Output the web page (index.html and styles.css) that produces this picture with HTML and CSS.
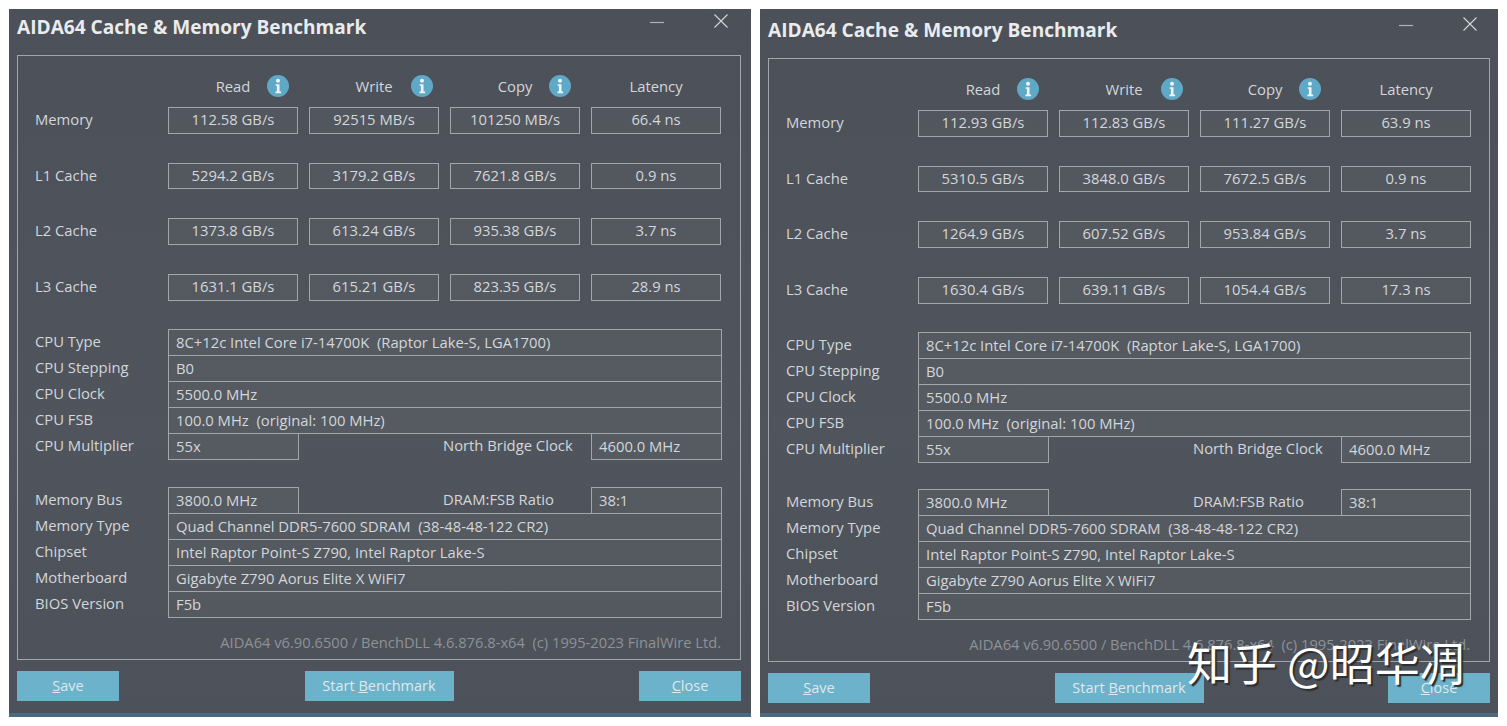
FILE: index.html
```html
<!DOCTYPE html>
<html lang="zh-CN">
<head>
    <meta charset="UTF-8">
    <title>AIDA64 Cache &amp; Memory Benchmark</title>
    <link rel="stylesheet" href="styles.css">
</head>
<body>
    <div class="window window-left">
        <div class="titlebar">
            <span class="title">AIDA64 Cache &amp; Memory Benchmark</span>
            <svg class="btn-min" width="16" height="3" viewBox="0 0 16 3"><path d="M1 1.5h14" stroke="#aeb2b7" stroke-width="1.2"/></svg>
            <svg class="btn-x" width="16" height="16" viewBox="0 0 16 16"><path d="M1.5 1.5l13 13M14.5 1.5l-13 13" stroke="#d5d8db" stroke-width="1.1" fill="none"/></svg>
        </div>
        <div class="frame">
            <div class="bench-head">
                <div></div>
                <div class="head">Read<svg class="info" viewBox="0 0 22 22"><circle cx="11" cy="11" r="11" fill="#5fa9c6"/><circle cx="11" cy="5.8" r="2" fill="#eef6f9"/><path d="M8.6 9.2h3.9v7.4h1.6v1.6H8.4v-1.6h1.5v-5.8H8.6z" fill="#eef6f9"/></svg></div>
                <div class="head">Write<svg class="info info-w" viewBox="0 0 22 22"><circle cx="11" cy="11" r="11" fill="#5fa9c6"/><circle cx="11" cy="5.8" r="2" fill="#eef6f9"/><path d="M8.6 9.2h3.9v7.4h1.6v1.6H8.4v-1.6h1.5v-5.8H8.6z" fill="#eef6f9"/></svg></div>
                <div class="head">Copy<svg class="info" viewBox="0 0 22 22"><circle cx="11" cy="11" r="11" fill="#5fa9c6"/><circle cx="11" cy="5.8" r="2" fill="#eef6f9"/><path d="M8.6 9.2h3.9v7.4h1.6v1.6H8.4v-1.6h1.5v-5.8H8.6z" fill="#eef6f9"/></svg></div>
                <div class="head">Latency</div>
            </div>
            <div class="bench">
                <div class="label">Memory</div>
                <div class="cell">112.58 GB/s</div>
                <div class="cell">92515 MB/s</div>
                <div class="cell">101250 MB/s</div>
                <div class="cell">66.4 ns</div>

                <div class="label">L1 Cache</div>
                <div class="cell">5294.2 GB/s</div>
                <div class="cell">3179.2 GB/s</div>
                <div class="cell">7621.8 GB/s</div>
                <div class="cell">0.9 ns</div>

                <div class="label">L2 Cache</div>
                <div class="cell">1373.8 GB/s</div>
                <div class="cell">613.24 GB/s</div>
                <div class="cell">935.38 GB/s</div>
                <div class="cell">3.7 ns</div>

                <div class="label">L3 Cache</div>
                <div class="cell">1631.1 GB/s</div>
                <div class="cell">615.21 GB/s</div>
                <div class="cell">823.35 GB/s</div>
                <div class="cell">28.9 ns</div>
            </div>

            <div class="info-block">
                <div class="row"><div class="label">CPU Type</div><div class="val">8C+12c Intel Core i7-14700K&nbsp; (Raptor Lake-S, LGA1700)</div></div>
                <div class="row"><div class="label">CPU Stepping</div><div class="val">B0</div></div>
                <div class="row"><div class="label">CPU Clock</div><div class="val">5500.0 MHz</div></div>
                <div class="row"><div class="label">CPU FSB</div><div class="val">100.0 MHz&nbsp; (original: 100 MHz)</div></div>
                <div class="row"><div class="label">CPU Multiplier</div><div class="val short">55x</div><div class="side">North Bridge Clock</div><div class="val">4600.0 MHz</div></div>
            </div>

            <div class="info-block block-2">
                <div class="row"><div class="label">Memory Bus</div><div class="val short">3800.0 MHz</div><div class="side">DRAM:FSB Ratio</div><div class="val">38:1</div></div>
                <div class="row"><div class="label">Memory Type</div><div class="val">Quad Channel DDR5-7600 SDRAM&nbsp; (38-48-48-122 CR2)</div></div>
                <div class="row"><div class="label">Chipset</div><div class="val">Intel Raptor Point-S Z790, Intel Raptor Lake-S</div></div>
                <div class="row"><div class="label">Motherboard</div><div class="val">Gigabyte Z790 Aorus Elite X WiFi7</div></div>
                <div class="row"><div class="label">BIOS Version</div><div class="val">F5b</div></div>
            </div>

            <div class="copyright">AIDA64 v6.90.6500 / BenchDLL 4.6.876.8-x64&nbsp; (c) 1995-2023 FinalWire Ltd.</div>
        </div>
        <div class="buttons">
            <button class="btn btn-side"><u>S</u>ave</button>
            <button class="btn btn-start">Start <u>B</u>enchmark</button>
            <button class="btn btn-side"><u>C</u>lose</button>
        </div>
    </div>

    <div class="window window-right">
        <div class="titlebar">
            <span class="title">AIDA64 Cache &amp; Memory Benchmark</span>
            <svg class="btn-min" width="16" height="3" viewBox="0 0 16 3"><path d="M1 1.5h14" stroke="#aeb2b7" stroke-width="1.2"/></svg>
            <svg class="btn-x" width="16" height="16" viewBox="0 0 16 16"><path d="M1.5 1.5l13 13M14.5 1.5l-13 13" stroke="#d5d8db" stroke-width="1.1" fill="none"/></svg>
        </div>
        <div class="frame">
            <div class="bench-head">
                <div></div>
                <div class="head">Read<svg class="info" viewBox="0 0 22 22"><circle cx="11" cy="11" r="11" fill="#5fa9c6"/><circle cx="11" cy="5.8" r="2" fill="#eef6f9"/><path d="M8.6 9.2h3.9v7.4h1.6v1.6H8.4v-1.6h1.5v-5.8H8.6z" fill="#eef6f9"/></svg></div>
                <div class="head">Write<svg class="info info-w" viewBox="0 0 22 22"><circle cx="11" cy="11" r="11" fill="#5fa9c6"/><circle cx="11" cy="5.8" r="2" fill="#eef6f9"/><path d="M8.6 9.2h3.9v7.4h1.6v1.6H8.4v-1.6h1.5v-5.8H8.6z" fill="#eef6f9"/></svg></div>
                <div class="head">Copy<svg class="info" viewBox="0 0 22 22"><circle cx="11" cy="11" r="11" fill="#5fa9c6"/><circle cx="11" cy="5.8" r="2" fill="#eef6f9"/><path d="M8.6 9.2h3.9v7.4h1.6v1.6H8.4v-1.6h1.5v-5.8H8.6z" fill="#eef6f9"/></svg></div>
                <div class="head">Latency</div>
            </div>
            <div class="bench">
                <div class="label">Memory</div>
                <div class="cell">112.93 GB/s</div>
                <div class="cell">112.83 GB/s</div>
                <div class="cell">111.27 GB/s</div>
                <div class="cell">63.9 ns</div>

                <div class="label">L1 Cache</div>
                <div class="cell">5310.5 GB/s</div>
                <div class="cell">3848.0 GB/s</div>
                <div class="cell">7672.5 GB/s</div>
                <div class="cell">0.9 ns</div>

                <div class="label">L2 Cache</div>
                <div class="cell">1264.9 GB/s</div>
                <div class="cell">607.52 GB/s</div>
                <div class="cell">953.84 GB/s</div>
                <div class="cell">3.7 ns</div>

                <div class="label">L3 Cache</div>
                <div class="cell">1630.4 GB/s</div>
                <div class="cell">639.11 GB/s</div>
                <div class="cell">1054.4 GB/s</div>
                <div class="cell">17.3 ns</div>
            </div>

            <div class="info-block">
                <div class="row"><div class="label">CPU Type</div><div class="val">8C+12c Intel Core i7-14700K&nbsp; (Raptor Lake-S, LGA1700)</div></div>
                <div class="row"><div class="label">CPU Stepping</div><div class="val">B0</div></div>
                <div class="row"><div class="label">CPU Clock</div><div class="val">5500.0 MHz</div></div>
                <div class="row"><div class="label">CPU FSB</div><div class="val">100.0 MHz&nbsp; (original: 100 MHz)</div></div>
                <div class="row"><div class="label">CPU Multiplier</div><div class="val short">55x</div><div class="side">North Bridge Clock</div><div class="val">4600.0 MHz</div></div>
            </div>

            <div class="info-block block-2">
                <div class="row"><div class="label">Memory Bus</div><div class="val short">3800.0 MHz</div><div class="side">DRAM:FSB Ratio</div><div class="val">38:1</div></div>
                <div class="row"><div class="label">Memory Type</div><div class="val">Quad Channel DDR5-7600 SDRAM&nbsp; (38-48-48-122 CR2)</div></div>
                <div class="row"><div class="label">Chipset</div><div class="val">Intel Raptor Point-S Z790, Intel Raptor Lake-S</div></div>
                <div class="row"><div class="label">Motherboard</div><div class="val">Gigabyte Z790 Aorus Elite X WiFi7</div></div>
                <div class="row"><div class="label">BIOS Version</div><div class="val">F5b</div></div>
            </div>

            <div class="copyright">AIDA64 v6.90.6500 / BenchDLL 4.6.876.8-x64&nbsp; (c) 1995-2023 FinalWire Ltd.</div>
        </div>
        <div class="buttons">
            <button class="btn btn-side"><u>S</u>ave</button>
            <button class="btn btn-start">Start <u>B</u>enchmark</button>
            <button class="btn btn-side"><u>C</u>lose</button>
        </div>
        <div class="watermark">知乎 @昭华凋</div>
    </div>
</body>
</html>
```

FILE: styles.css
```css
/* page */
body {
    margin: 0;
    height: 726px;
    box-sizing: border-box;
    padding: 9px 9px 0;
    display: flex;
    gap: 9px;
    overflow: hidden;
    background-color: #fff;
    font-family: "Open Sans", "Noto Sans", sans-serif;
    font-size: 14.8px;
    color: #d3d6da;
}

/* window */
.window {
    position: relative;
    box-sizing: border-box;
    height: 708px;
    padding: 0 8px;
    background: linear-gradient(to bottom, #4b5059 0, #50555d 60%, #4d525a 99.4%, #4a6a7e 99.5%);
}

.window-left {
    width: 742px;
    padding-right: 10px;
}

.window-right {
    width: 738px;
    padding-top: 3px;
}

.titlebar {
    height: 46px;
    display: flex;
    align-items: flex-start;
}

.title {
    margin-top: 5px;
    font-size: 19.1px;
    font-weight: 700;
    line-height: 26px;
    color: #e9ebed;
    white-space: nowrap;
}

.btn-min {
    margin: 12px 0 0 auto;
}

.btn-x {
    margin: 4px 12px 0 48px;
}

/* main frame */
.frame {
    box-sizing: border-box;
    height: 605px;
    padding: 20px 18px 0 17px;
    border: 1px solid #a2a6ac;
}

.window-right .frame {
    height: 604px;
}

.bench-head,
.bench {
    display: grid;
    grid-template-columns: 122px repeat(4, 130px);
    column-gap: 11px;
}

/* second window sits one pixel tighter */
.window-right .bench-head,
.window-right .bench {
    grid-template-columns: 121px repeat(4, 130px);
}

.bench-head {
    height: 22px;
    margin-bottom: 9px;
}

.bench {
    grid-auto-rows: 26.7px;
    row-gap: 29px;
}

.head {
    position: relative;
    text-align: center;
    line-height: 20px;
}

.label {
    line-height: 25px;
    white-space: nowrap;
}

.cell {
    box-sizing: border-box;
    border: 1px solid #a2a6ac;
    background-color: rgba(255, 255, 255, 0.035);
    text-align: center;
    line-height: 23px;
    white-space: nowrap;
}

.info {
    position: absolute;
    top: -1px;
    right: 9px;
    width: 22px;
    height: 22px;
}

.info-w {
    right: 6px;
}

/* cpu / memory rows */
.info-block {
    margin-top: 28px;
}

.block-2 {
    margin-top: 28px;
}

.window-right .block-2 {
    margin-top: 27px;
}

.row {
    display: flex;
    height: 26px;
}

.row .label {
    width: 133px;
    flex: none;
}

.window-right .row .label {
    width: 132px;
}

.val {
    flex: 1;
    box-sizing: border-box;
    height: 27px;
    padding-left: 7px;
    border: 1px solid #a2a6ac;
    background-color: rgba(255, 255, 255, 0.035);
    line-height: 24px;
    white-space: nowrap;
}

.val.short {
    flex: none;
    width: 131px;
}

.side {
    flex: none;
    width: 148px;
    padding-left: 144px;
    line-height: 25px;
    white-space: nowrap;
}

.copyright {
    margin-top: 13px;
    padding-right: 1px;
    text-align: right;
    font-size: 14.7px;
    color: #8d9198;
    line-height: 24px;
    white-space: nowrap;
}

/* bottom buttons */
.buttons {
    display: flex;
    justify-content: space-between;
    margin-top: 11px;
}

.btn {
    height: 30px;
    padding: 0 0 2px;
    border: none;
    background-color: #6cb2ca;
    color: #dfe9ec;
    font: inherit;
    font-size: 14.5px;
}

.btn-side {
    width: 102px;
}

.btn-start {
    width: 149px;
}

.watermark {
    position: absolute;
    left: 427px;
    top: 622px;
    font-family: "Noto Sans CJK SC", sans-serif;
    font-size: 45px;
    font-weight: 400;
    line-height: 62px;
    color: #fff;
    white-space: nowrap;
    text-shadow: 2px 2px 1px #2b2d31;
}
```
